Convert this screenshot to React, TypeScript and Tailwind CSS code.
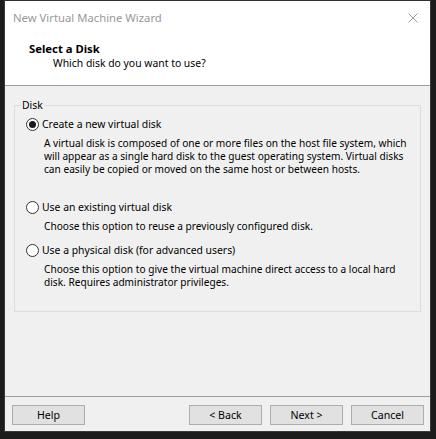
import React from "react";

const font = { fontFamily: '"Noto Sans", "Liberation Sans", sans-serif' };

function Radio({ checked }: { checked?: boolean }) {
  return (
    <div className="w-[13px] h-[13px] rounded-full border border-[#333333] bg-white flex items-center justify-center shrink-0">
      {checked && <div className="w-[7px] h-[7px] rounded-full bg-[#1a1a1a]" />}
    </div>
  );
}

function Option({
  label,
  lines,
  checked,
  className,
}: {
  label: string;
  lines: string[];
  checked?: boolean;
  className?: string;
}) {
  return (
    <div className={className}>
      <div className="flex items-center h-[16px]">
        <Radio checked={checked} />
        <span className="ml-[3px] leading-[16px] text-[10.4px]">{label}</span>
      </div>
      <div className="mt-[5px] ml-[18px] leading-[13px] text-[10.15px]">
        {lines.map((l, i) => (
          <div key={i} className="whitespace-nowrap">
            {l}
          </div>
        ))}
      </div>
    </div>
  );
}

function Btn({ children }: { children: React.ReactNode }) {
  return (
    <button className="w-[73px] h-[20px] bg-[#e1e1e1] border border-[#adadad] text-[10.6px] leading-[18px] text-black">
      {children}
    </button>
  );
}

export default function App() {
  return (
    <div className="w-[436px] h-[439px] bg-[#1c1c1c] pl-[4px] overflow-hidden" style={font}>
      <div className="w-[427px] h-[432px] border border-[#3a3a3a] border-t-[#2e2e2e] flex flex-col text-[11.3px] text-black">
        {/* Title bar */}
        <div className="h-[31px] bg-white flex items-center justify-between pl-[8px] pr-[12px]">
          <span className="text-[#999999] pt-[4px]">New Virtual Machine Wizard</span>
          <svg width="10" height="10" viewBox="0 0 10 10" className="mt-[3px]">
            <path d="M0.5 0.5 L9.5 9.5 M9.5 0.5 L0.5 9.5" stroke="#999999" strokeWidth="1" />
          </svg>
        </div>
        {/* Header */}
        <div className="h-[54px] bg-white border-b border-[#a0a0a0] pl-[24px] pt-[9px]">
          <div className="font-bold leading-[15px]">Select a Disk</div>
          <div className="pl-[24px] leading-[15px] text-[10.4px]">Which disk do you want to use?</div>
        </div>
        {/* Body */}
        <div className="flex-1 bg-[#f0f0f0] px-[9px] pt-[13px] min-w-0">
          <fieldset className="border border-[#dcdcdc] h-[213px] pl-[6px] min-w-0">
            <legend className="px-[1px] leading-[12px] text-[10.4px]">Disk</legend>
            <div className="pl-[5px] pt-[5px]">
              <Option
                checked
                label="Create a new virtual disk"
                lines={[
                  "A virtual disk is composed of one or more files on the host file system, which",
                  "will appear as a single hard disk to the guest operating system. Virtual disks",
                  "can easily be copied or moved on the same host or between hosts.",
                ]}
              />
              <Option
                className="mt-[23px]"
                label="Use an existing virtual disk"
                lines={["Choose this option to reuse a previously configured disk."]}
              />
              <Option
                className="mt-[9px]"
                label="Use a physical disk (for advanced users)"
                lines={[
                  "Choose this option to give the virtual machine direct access to a local hard",
                  "disk. Requires administrator privileges.",
                ]}
              />
            </div>
          </fieldset>
        </div>
        {/* Footer */}
        <div className="h-[35px] bg-[#f0f0f0] border-t border-[#a0a0a0] flex items-start pt-[8px] pl-[7px] pr-[6px]">
          <Btn>Help</Btn>
          <div className="flex-1" />
          <div className="flex gap-[8px]">
            <Btn>&lt; Back</Btn>
            <Btn>Next &gt;</Btn>
            <Btn>Cancel</Btn>
          </div>
        </div>
      </div>
    </div>
  );
}
